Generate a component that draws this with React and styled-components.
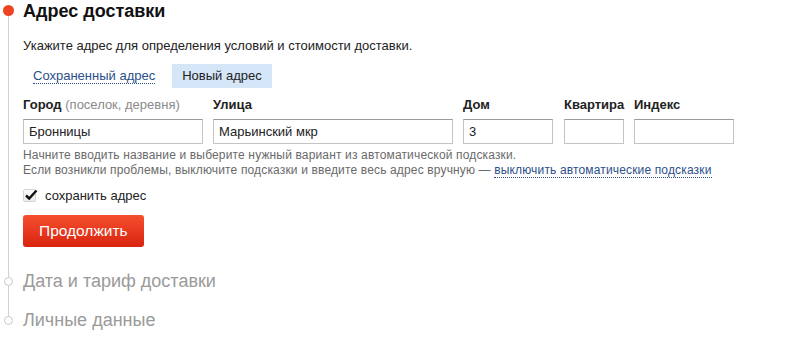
import styled, { createGlobalStyle } from 'styled-components'

const Global = createGlobalStyle`
	body {
		margin: 0;
		background: #fff;
		font-family: "Liberation Sans", Arial, sans-serif;
		color: #222;
	}
`

const Steps = styled.div`
	position: relative;
	padding-left: 23px;
	width: 772px;

	&::before {
		content: "";
		position: absolute;
		left: 8px;
		top: 11px;
		bottom: 10px;
		width: 1px;
		background: #d0d0d0;
	}
`

const Step = styled.section`
	position: relative;
	margin-top: ${props => props.$gap || 0}px;

	&::before {
		content: "";
		position: absolute;
		box-sizing: border-box;
		left: ${props => props.$active ? -20 : -19}px;
		top: ${props => props.$active ? 5 : 6}px;
		width: ${props => props.$active ? 11 : 9}px;
		height: ${props => props.$active ? 11 : 9}px;
		border-radius: 50%;
		background: ${props => props.$active ? "#ef4423" : "#fff"};
		border: ${props => props.$active ? "none" : "1px solid #c8c8c8"};
	}
`

const StepTitle = styled.h2`
	margin: 0;
	font-size: 18px;
	line-height: ${props => props.$active ? "22px" : "20px"};
	font-weight: ${props => props.$active ? "bold" : "normal"};
	color: ${props => props.$active ? "#111" : "#9a9a9a"};
`

const Lead = styled.p`
	margin: 16px 0 0;
	font-size: 13px;
	line-height: 16px;
	color: #222;
`

const Tabs = styled.div`
	display: flex;
	gap: 7px;
	margin-top: 10px;
`

const Tab = styled.div`
	padding: 0 10px;
	height: 24px;
	line-height: 24px;
	font-size: 13px;
	background: ${props => props.$current ? "#d5e6f8" : "transparent"};
	color: ${props => props.$current ? "#222" : "#2b4f8a"};
`

const Dotted = styled.span`
	color: #2b4f8a;
	border-bottom: 1px dotted #2b4f8a;
	cursor: pointer;
`

const Fields = styled.div`
	display: flex;
	gap: 10px;
	margin-top: 9px;
`

const Field = styled.label`
	display: flex;
	flex-direction: column;
	gap: 6px;
	width: ${props => props.$w}px;
	margin-left: ${props => props.$shift || 0}px;
`

const FieldLabel = styled.span`
	font-size: 13px;
	line-height: 16px;
	font-weight: bold;
	color: #222;
	white-space: nowrap;
`

const Note = styled.span`
	font-weight: normal;
	color: #8a8a8a;
`

const Input = styled.input`
	box-sizing: border-box;
	width: 100%;
	height: 25px;
	margin: 0;
	padding: 0 5px;
	border: 1px solid #c4c4c4;
	border-top-color: #9c9c9c;
	font-family: inherit;
	font-size: 13px;
	color: #222;
	outline: none;
`

const Hint = styled.p`
	margin: 4px 0 0;
	font-size: 12px;
	line-height: 15px;
	letter-spacing: 0.15px;
	color: #6a6a6a;
`

const CheckRow = styled.label`
	display: flex;
	align-items: center;
	gap: 9px;
	margin-top: 9px;
	height: 16px;
	font-size: 13px;
	color: #222;
`

const Box = styled.span`
	position: relative;
	box-sizing: border-box;
	width: 13px;
	height: 13px;
	border: 1px solid #d4d4d4;
	border-radius: 2px;
	background: linear-gradient(#fafafa, #ececec);

	svg {
		position: absolute;
		left: 0;
		top: -2px;
	}
`

const Button = styled.button`
	margin-top: 12px;
	height: 32px;
	padding: 0 16px;
	border: none;
	border-radius: 3px;
	background: linear-gradient(#f5502f, #d9230f);
	color: #fff;
	font-family: inherit;
	font-size: 15.5px;
	cursor: pointer;
`

const fields = [
	{ label: "Город", note: "(поселок, деревня)", w: 180, value: "Бронницы" },
	{ label: "Улица", w: 240, value: "Марьинский мкр" },
	{ label: "Дом", w: 90, value: "3" },
	{ label: "Квартира", w: 60, value: "", shift: 1 },
	{ label: "Индекс", w: 100, value: "" },
]

export default function App() {
	return (
		<>
			<Global />
			<Steps>
				<Step $active>
					<StepTitle $active>Адрес доставки</StepTitle>
					<Lead>Укажите адрес для определения условий и стоимости доставки.</Lead>
					<Tabs>
						<Tab><Dotted>Сохраненный адрес</Dotted></Tab>
						<Tab $current>Новый адрес</Tab>
					</Tabs>
					<Fields>
						{fields.map(f => (
							<Field key={f.label} $w={f.w} $shift={f.shift}>
								<FieldLabel>{f.label} {f.note && <Note>{f.note}</Note>}</FieldLabel>
								<Input defaultValue={f.value} />
							</Field>
						))}
					</Fields>
					<Hint>
						Начните вводить название и выберите нужный вариант из автоматической подсказки.<br />
						Если возникли проблемы, выключите подсказки и введите весь адрес вручную — <Dotted>выключить автоматические подсказки</Dotted>
					</Hint>
					<CheckRow>
						<Box>
							<svg width="14" height="14" viewBox="0 0 14 14">
								<path d="M2 7.5 L5.2 10.5 L12.5 2.5" fill="none" stroke="#111" strokeWidth="2.4" />
							</svg>
						</Box>
						сохранить адрес
					</CheckRow>
					<Button>Продолжить</Button>
				</Step>
				<Step $gap={24}>
					<StepTitle>Дата и тариф доставки</StepTitle>
				</Step>
				<Step $gap={19}>
					<StepTitle>Личные данные</StepTitle>
				</Step>
			</Steps>
		</>
	)
}
